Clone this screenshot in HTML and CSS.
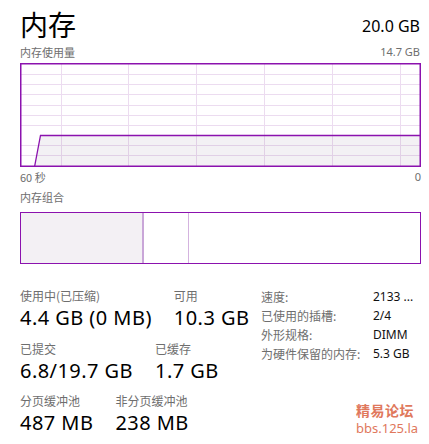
FILE: index.html
```html
<!DOCTYPE html>
<html lang="zh-CN">
<head>
    <meta charset="UTF-8">
    <title>内存</title>
    <link rel="stylesheet" href="styles.css">
</head>
<body>

<div class="page">
    <div class="header">
        <h1 class="title">内存</h1>
        <div class="total">20.0 GB</div>
    </div>

    <div class="caption-row">
        <span>内存使用量</span>
        <span>14.7 GB</span>
    </div>

    <svg class="graph" width="401" height="104" viewBox="0 0 401 104">
        <g stroke="#ecdcf0" stroke-width="1">
            <line x1="0" y1="11.5" x2="401" y2="11.5"/>
            <line x1="0" y1="21.5" x2="401" y2="21.5"/>
            <line x1="0" y1="31.5" x2="401" y2="31.5"/>
            <line x1="0" y1="42.5" x2="401" y2="42.5"/>
            <line x1="0" y1="52.5" x2="401" y2="52.5"/>
            <line x1="0" y1="62.5" x2="401" y2="62.5"/>
            <line x1="0" y1="82.5" x2="401" y2="82.5"/>
            <line x1="0" y1="92.5" x2="401" y2="92.5"/>
            <line x1="41.5" y1="0" x2="41.5" y2="104"/>
            <line x1="108.5" y1="0" x2="108.5" y2="104"/>
            <line x1="176.5" y1="0" x2="176.5" y2="104"/>
            <line x1="244.5" y1="0" x2="244.5" y2="104"/>
            <line x1="312.5" y1="0" x2="312.5" y2="104"/>
            <line x1="380.5" y1="0" x2="380.5" y2="104"/>
        </g>
        <polygon points="14.5,104 20.5,72.5 401,72.5 401,104" fill="#5a3a66" fill-opacity="0.07"/>
        <polyline points="14.5,104 20.5,72.5 401,72.5" fill="none" stroke="#8b12ae" stroke-width="1.3"/>
        <rect x="0.75" y="0.75" width="399.5" height="102.5" fill="none" stroke="#8b12ae" stroke-width="1.5"/>
    </svg>

    <div class="caption-row axis">
        <span>60 秒</span>
        <span>0</span>
    </div>

    <div class="caption section-label">内存组合</div>

    <div class="composition">
        <div class="part in-use"></div>
        <div class="part modified"></div>
        <div class="part standby"></div>
    </div>

    <div class="details">
        <div class="stats">
            <div class="stat-row">
                <div class="stat">
                    <div class="stat-label">使用中(已压缩)</div>
                    <div class="stat-value">4.4 GB (0 MB)</div>
                </div>
                <div class="stat">
                    <div class="stat-label">可用</div>
                    <div class="stat-value">10.3 GB</div>
                </div>
            </div>
            <div class="stat-row">
                <div class="stat">
                    <div class="stat-label">已提交</div>
                    <div class="stat-value">6.8/19.7 GB</div>
                </div>
                <div class="stat">
                    <div class="stat-label">已缓存</div>
                    <div class="stat-value">1.7 GB</div>
                </div>
            </div>
            <div class="stat-row">
                <div class="stat">
                    <div class="stat-label">分页缓冲池</div>
                    <div class="stat-value">487 MB</div>
                </div>
                <div class="stat">
                    <div class="stat-label">非分页缓冲池</div>
                    <div class="stat-value">238 MB</div>
                </div>
            </div>
        </div>

        <div class="props">
            <span class="prop-name">速度:</span><span class="prop-value">2133 ...</span>
            <span class="prop-name">已使用的插槽:</span><span class="prop-value">2/4</span>
            <span class="prop-name">外形规格:</span><span class="prop-value">DIMM</span>
            <span class="prop-name">为硬件保留的内存:</span><span class="prop-value">5.3 GB</span>
        </div>
    </div>
</div>

<div class="watermark">
    <div class="wm-name">精易论坛</div>
    <div class="wm-url">bbs.125.la</div>
</div>

</body>
</html>
```

FILE: styles.css
```css
body {
    margin: 0;
    background-color: #fff;
    font-family: "Noto Sans", "Noto Sans CJK SC", sans-serif;
    color: #000;
}
.page {
    padding: 0 8px 0 20px;
}
.header {
    display: flex;
    justify-content: space-between;
    align-items: flex-end;
    height: 44px;
}
.title {
    margin: 0;
    font-family: "Noto Sans CJK SC", sans-serif;
    font-weight: normal;
    font-size: 28px;
    line-height: 40px;
}
.total {
    font-size: 16px;
    line-height: 20px;
    margin-bottom: 8px;
    margin-right: 1px;
}
.caption-row {
    display: flex;
    justify-content: space-between;
    font-size: 11px;
    line-height: 16px;
    height: 19px;
    color: #6e6e6e;
    padding-right: 1px;
}
.caption-row span:first-child {
    font-family: "Noto Sans CJK SC", sans-serif;
}
.graph {
    display: block;
}
.axis {
    margin-top: 2px;
    height: 18px;
    padding-right: 0;
}
.section-label {
    font-family: "Noto Sans CJK SC", sans-serif;
    font-size: 11px;
    line-height: 16px;
    color: #6e6e6e;
    margin-top: 2px;
    height: 23px;
}
.composition {
    display: flex;
    height: 50px;
    border: 1px solid #8b12ae;
    width: 399px;
}
.part {
    height: 100%;
}
.in-use {
    width: 121px;
    background-color: #f3f0f4;
    border-right: 2px solid #c9a6d8;
}
.modified {
    width: 44px;
    border-right: 1px solid #d4b3df;
}
.standby {
    flex: 1;
}
.details {
    display: flex;
    margin-top: 23px;
}
.stats {
    display: flex;
    flex-direction: column;
    gap: 9.5px;
    width: 241px;
}
.stat-row {
    display: flex;
    gap: 22px;
}
.stat-label {
    font-family: "Noto Sans CJK SC", sans-serif;
    font-size: 12px;
    line-height: 18px;
    color: #6e6e6e;
}
.stat-value {
    font-size: 20px;
    line-height: 25px;
    letter-spacing: 0.45px;
    white-space: nowrap;
}
.props {
    display: grid;
    grid-template-columns: 112px auto;
    grid-auto-rows: 19px;
    font-size: 12px;
    line-height: 19px;
}
.prop-name {
    font-family: "Noto Sans CJK SC", sans-serif;
    color: #6e6e6e;
}
.prop-value {
    color: #111;
}
.watermark {
    position: absolute;
    left: 356px;
    top: 400px;
    color: #e0785c;
    font-family: "Noto Sans CJK SC", sans-serif;
}
.wm-name {
    font-size: 14px;
    line-height: 20px;
    font-weight: bold;
    letter-spacing: 0.5px;
}
.wm-url {
    font-family: "Noto Sans", sans-serif;
    font-size: 13px;
    line-height: 16px;
}
```
